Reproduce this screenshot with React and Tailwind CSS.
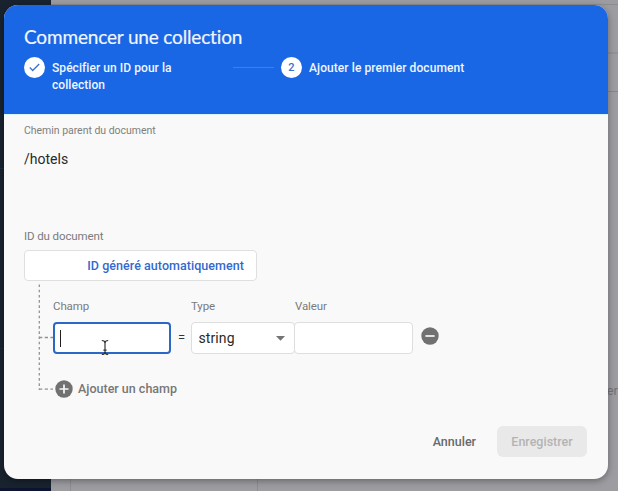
import React from "react";

const label = "text-[11.5px] leading-[16px] tracking-[-0.1px] text-[#7b7b7b] whitespace-nowrap";

function Backdrop() {
  return (
    <div className="flex h-full w-full">
      <div className="flex w-[51px] flex-col bg-[#18232f]">
        <div className="h-[169px] border-b border-[#1b3047]" />
        <div className="h-[180px] border-b border-[#1b2a3b]" />
        <div className="flex-1" />
        <div className="h-[3px] bg-[#0c1430]" />
      </div>
      <div className="flex flex-1 flex-col bg-[#9c9ca1]">
        <div className="h-[5px] border-b border-[#8d8d91]" />
        <div className="h-[49px] border-b-2 border-[#929297]" />
        <div className="h-[38px] border-b border-[#87878b]" />
        <div className="flex flex-1">
          <div className="w-[20px] border-r border-[#8d8d92]" />
          <div className="w-[187px] border-r border-[#8d8d92]" />
          <div className="flex flex-1 justify-end pt-[290px] text-[13px] leading-[18px] text-[#737378]">
            <span>ler</span>
          </div>
        </div>
      </div>
    </div>
  );
}

function Header() {
  return (
    <header className="h-[109px] bg-[#1967e5] pl-[20px] pt-[19px] text-[#f0f6ff]">
      <h1 className="h-[26px] whitespace-nowrap font-['Lato','Roboto',sans-serif] text-[19px] leading-[26px] tracking-[-0.16px] [-webkit-text-stroke:0.2px_#f0f6ff]">
        Commencer une collection
      </h1>
      <div className="mt-[7px] flex items-start">
        <div className="flex size-[21px] items-center justify-center rounded-full bg-white">
          <svg width="11" height="9" viewBox="0 0 11 9" fill="none" stroke="#3f75d7" strokeWidth="1.4">
            <path d="M.8 4.6 3.7 7.4 10.2.9" />
          </svg>
        </div>
        <div className="ml-[7px] mt-[3px] w-[181px] text-[12px] font-medium leading-[17px] tracking-[0.06px]">
          Spécifier un ID pour la
          <br />
          collection
        </div>
        <div className="mt-[10px] h-px w-[41px] bg-[#3c7df0]" />
        <div className="ml-[7px] flex size-[21px] items-center justify-center rounded-full bg-white pt-px text-[11px] font-medium text-[#3b70d2]">
          2
        </div>
        <div className="ml-[7px] mt-[3px] whitespace-nowrap text-[12px] font-medium leading-[17px] tracking-[0.08px]">
          Ajouter le premier document
        </div>
      </div>
    </header>
  );
}

function Connector() {
  return (
    <svg className="mt-[3px] shrink-0" width="29" height="110" viewBox="0 0 29 110" fill="none" stroke="#929292" strokeWidth="1.3">
      <path d="M15.3 .5V106" strokeDasharray="2.6 2.6" />
      <path d="M15 53.5H29M15 105.2H29" strokeDasharray="3.3 2.4" />
    </svg>
  );
}

function RoundIcon({ plus }) {
  return (
    <svg width="18" height="18" viewBox="0 0 18 18" className="shrink-0">
      <circle cx="9" cy="9" r="8.7" fill="#717171" />
      <path d={plus ? "M4.5 9h9M9 4.5v9" : "M4.4 9h9.2"} stroke="#f8f8f8" strokeWidth="1.7" />
    </svg>
  );
}

function Fields() {
  return (
    <div className="flex h-[114px]">
      <Connector />
      <div className="flex-1 pt-[17px]">
        <div className="flex">
          <span className={`${label} w-[138px]`}>Champ</span>
          <span className={`${label} w-[104px]`}>Type</span>
          <span className={label}>Valeur</span>
        </div>
        <div className="mt-[8px] flex items-center">
          <div className="relative flex h-[32px] w-[118px] items-center rounded-[4px] border-2 border-[#2b68c5] bg-white pl-[5px]">
            <div className="h-[17px] w-px bg-[#202020]" />
            <svg className="absolute left-[45px] top-[15px]" width="10" height="17" viewBox="0 0 10 17" fill="none" stroke="#333" strokeWidth="1.2">
              <path d="M1.8 1.5Q5 1.5 5 4.3Q5 1.5 8.2 1.5M5 4V13M1.8 15.5Q5 15.5 5 12.7Q5 15.5 8.2 15.5M3.4 11.2H6.6" />
            </svg>
          </div>
          <span className="w-[20px] pl-px text-center text-[13px] leading-[18px] text-[#333]">=</span>
          <div className="flex h-[32px] w-[104px] items-center justify-between rounded-[4px] border border-[#dedede] bg-white pl-[6.5px] pr-[9px] text-[14px] tracking-[0.1px] text-[#292929]">
            string
            <svg width="9" height="5" viewBox="0 0 9 5" fill="#747474">
              <path d="M0 0h9L4.5 4.8z" />
            </svg>
          </div>
          <div className="-ml-px h-[32px] w-[119px] rounded-[4px] border border-[#dedede] bg-white" />
          <div className="-mt-[4px] ml-[8px]">
            <RoundIcon />
          </div>
        </div>
        <div className="ml-[2px] mt-[25px] flex items-center gap-[5px] text-[12.5px] font-medium leading-[20px] text-[#777]">
          <RoundIcon plus />
          Ajouter un champ
        </div>
      </div>
    </div>
  );
}

export default function App() {
  return (
    <div className="relative h-[491px] w-[618px] overflow-hidden font-['Roboto','Liberation_Sans',sans-serif]">
      <Backdrop />
      <div className="absolute left-[4px] top-[5px] flex h-[473.5px] w-[604px] flex-col overflow-hidden rounded-[14px] bg-[#f9f9f9] shadow-[0_2px_7px_rgba(0,0,0,0.35)]">
        <Header />
        <main className="flex flex-1 flex-col border-t border-[#d9f6ff] pl-[20px] pt-[8px]">
          <div className="whitespace-nowrap text-[10.5px] leading-[16px] tracking-[-0.03px] text-[#7f7f7f]">Chemin parent du document</div>
          <div className="mt-[10px] text-[14px] leading-[20px] text-[#292929]">/hotels</div>
          <div className={`${label} mt-[59px]`}>ID du document</div>
          <div className="mt-[6px] flex h-[31px] w-[233px] items-center justify-end rounded-[4px] border border-[#dfdfdf] bg-white pr-[12px] pt-px text-[12.5px] font-medium tracking-[0.05px] text-[#3369cf]">
            ID généré automatiquement
          </div>
          <Fields />
          <footer className="mt-[31px] flex items-center justify-end pr-[21px] text-[12.5px] font-medium">
            <button className="mr-[21px] pt-[2px] text-[#696969]">Annuler</button>
            <button className="h-[31px] w-[90px] rounded-[6px] bg-[#e9e9e9] pt-[2px] text-[#b4b4b4]">Enregistrer</button>
          </footer>
        </main>
      </div>
    </div>
  );
}
